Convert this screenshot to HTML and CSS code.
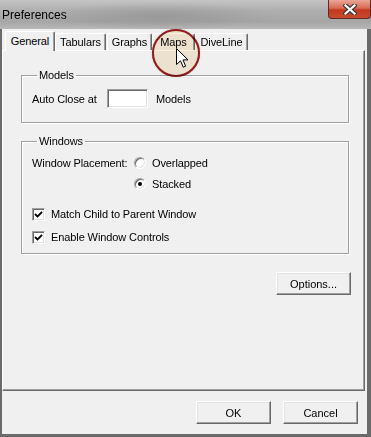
FILE: index.html
```html
<!DOCTYPE html>
<html lang="en">
<head>
  <meta charset="UTF-8" />
  <title>Preferences</title>
  <link rel="stylesheet" href="styles.css">
</head>
<body>
  <div class="window">
    <div class="titlebar">
      <span class="title">Preferences</span>
      <div class="close">
        <svg width="14" height="11" viewBox="0 0 14 11">
          <path d="M2.5 1.5 L11.5 9.5 M11.5 1.5 L2.5 9.5" stroke="#3a3a3a" stroke-width="4.5" stroke-linecap="square" />
          <path d="M2.5 1.5 L11.5 9.5 M11.5 1.5 L2.5 9.5" stroke="#fff" stroke-width="2.2" stroke-linecap="square" />
        </svg>
      </div>
    </div>

    <div class="frame">
      <div class="tabs">
        <div class="tab active tab-general">General</div>
        <div class="tab tab-tabulars">Tabulars</div>
        <div class="tab tab-graphs">Graphs</div>
        <div class="tab tab-maps">Maps</div>
        <div class="tab tab-diveline">DiveLine</div>
      </div>

      <div class="panel">
        <fieldset class="group models">
          <legend>Models</legend>
          <div class="row">
            <span class="row-label">Auto Close at</span>
            <input class="field" type="text" aria-label="Auto close count">
            <span class="row-unit">Models</span>
          </div>
        </fieldset>

        <fieldset class="group windows">
          <legend>Windows</legend>
          <div class="placement">
            <span class="placement-label">Window Placement:</span>
            <div class="radios">
              <div class="option"><span class="radio"></span>Overlapped</div>
              <div class="option"><span class="radio checked"></span>Stacked</div>
            </div>
          </div>
          <div class="option check-row first">
            <span class="checkbox">
              <svg width="9" height="9" viewBox="0 0 9 9"><path d="M1 4 L3.5 6.5 L8 2" fill="none" stroke="#000" stroke-width="1.8" /></svg>
            </span>
            Match Child to Parent Window
          </div>
          <div class="option check-row">
            <span class="checkbox">
              <svg width="9" height="9" viewBox="0 0 9 9"><path d="M1 4 L3.5 6.5 L8 2" fill="none" stroke="#000" stroke-width="1.8" /></svg>
            </span>
            Enable Window Controls
          </div>
        </fieldset>

        <div class="actions">
          <button class="btn">Options...</button>
        </div>
      </div>

      <div class="footer">
        <button class="btn">OK</button>
        <button class="btn">Cancel</button>
      </div>
    </div>

    <!-- click highlight + pointer drawn over the tabs -->
    <div class="spotlight"></div>
    <svg class="cursor" width="14" height="21" viewBox="0 0 14 21">
      <path d="M0.5 0.5 V16.5 L4.5 12.8 L7.2 19.2 L9.6 18.2 L7 11.9 H12 Z" fill="#fff" stroke="#000" stroke-width="1" stroke-linejoin="miter" />
    </svg>
  </div>
</body>
</html>
```

FILE: styles.css
```css
* {
  box-sizing: border-box;
}
body {
  margin: 0;
  font-family: "Liberation Sans", Arial, sans-serif;
  font-size: 11px;
  letter-spacing: -0.1px;
  color: #000;
  background: #f0f0f0;
}
.window {
  position: relative;
  width: 371px;
  height: 437px;
  overflow: hidden;
  background: #f0f0f0;
}

/* title bar */
.titlebar {
  height: 29px;
  display: flex;
  align-items: flex-start;
  padding-left: 2px;
  background:
    radial-gradient(ellipse 120px 14px at 160px 16px, rgba(120,120,120,0.35), transparent),
    linear-gradient(to bottom, #c4c4c4 0%, #b0b0b0 35%, #a6a6a6 75%, #b8b8b8 100%);
}
.title {
  font-size: 12px;
  line-height: 14px;
  margin-top: 8px;
  letter-spacing: 0;
}
.close {
  margin-left: auto;
  width: 43px;
  height: 19px;
  display: flex;
  align-items: center;
  justify-content: center;
  border: 1px solid #5e2a22;
  border-top: none;
  border-radius: 0 0 4px 4px;
  background: linear-gradient(to bottom, #e9a697 0%, #d86a54 45%, #c3381f 55%, #c84a2c 100%);
}

/* frame */
.frame {
  height: 408px;
  display: flex;
  flex-direction: column;
  border-style: solid;
  border-color: #6a6a6a;
  border-width: 0 4px 3px 2px;
}

/* tabs */
.tabs {
  height: 21px;
  display: flex;
  align-items: flex-end;
  padding: 2px 0 0 3px;
}
.tab {
  height: 17px;
  display: flex;
  align-items: center;
  justify-content: center;
  border-top: 1px solid #fff;
  border-left: 1px solid #fff;
  border-right: 1px solid #696969;
  border-radius: 2px 2px 0 0;
  box-shadow: inset -1px 0 #a0a0a0;
  background: #f0f0f0;
}
.tab.active {
  position: relative;
  z-index: 1;
  height: 20px;
  margin-bottom: -1px;
  padding-bottom: 1px;
}
.tab-general { width: 50px; }
.tab-tabulars { width: 51px; }
.tab-graphs { width: 45px; margin-left: 1px; }
.tab-maps { width: 43px; }
.tab-diveline { width: 53px; }

/* panel */
.panel {
  height: 341px;
  margin-right: 2px;
  padding: 0 15px 0 18px;
  border-style: solid;
  border-width: 1px;
  border-color: #fff #696969 #696969 #fff;
  box-shadow: inset -1px -1px #a0a0a0;
}

.group {
  margin: 0;
  min-width: 0;
  border: 1px solid #a0a0a0;
  box-shadow: 1px 1px #fff, inset 1px 1px #fff;
}
.group legend {
  margin-left: 5px;
  padding: 0 2px;
  line-height: 13px;
}
.models {
  margin-top: 18px;
  padding: 7px 0 14px 10px;
}
.windows {
  margin-top: 12px;
  padding: 7px 0 8px 10px;
}

.row {
  display: flex;
  align-items: center;
  height: 19px;
}
.row-label {
  width: 75px;
}
.field {
  width: 41px;
  height: 19px;
  padding: 0;
  background: #fff;
  border-style: solid;
  border-width: 1px;
  border-color: #a0a0a0 #fff #fff #a0a0a0;
  box-shadow: inset 1px 1px #696969, inset -1px -1px #e3e3e3;
}
.row-unit {
  margin-left: 8px;
}

.placement {
  display: flex;
}
.placement-label {
  width: 102px;
  line-height: 16px;
}
.radios {
  display: flex;
  flex-direction: column;
  gap: 5px;
}
.option {
  display: flex;
  align-items: center;
  height: 16px;
}
.radio {
  position: relative;
  width: 12px;
  height: 12px;
  margin-right: 6px;
  border-radius: 50%;
  background: #fff;
  border: 1px solid;
  border-color: #a0a0a0 #fff #fff #a0a0a0;
  box-shadow: inset 1px 1px #696969, inset -1px -1px #e3e3e3;
}
.radio.checked::after {
  content: "";
  position: absolute;
  left: 3px;
  top: 3px;
  width: 4px;
  height: 4px;
  border-radius: 50%;
  background: #000;
}

.check-row {
  margin-top: 7px;
}
.check-row.first {
  margin-top: 14px;
}
.checkbox {
  width: 13px;
  height: 13px;
  margin-right: 6px;
  display: flex;
  align-items: center;
  justify-content: center;
  background: #fff;
  border: 1px solid;
  border-color: #a0a0a0 #fff #fff #a0a0a0;
  box-shadow: inset 1px 1px #696969, inset -1px -1px #e3e3e3;
}

.actions {
  display: flex;
  justify-content: flex-end;
  margin: 18px -2px 0 0;
}

.btn {
  width: 75px;
  height: 23px;
  padding: 0;
  font: inherit;
  color: #000;
  background: #f0f0f0;
  border: 1px solid;
  border-color: #fff #696969 #696969 #fff;
  box-shadow: inset -1px -1px #a0a0a0, inset 1px 1px #e3e3e3;
}

.footer {
  flex: 1;
  display: flex;
  justify-content: flex-end;
  gap: 12px;
  padding: 10px 9px 0 0;
}

/* click highlight */
.spotlight {
  position: absolute;
  left: 152px;
  top: 29px;
  width: 48px;
  height: 48px;
  border-radius: 50%;
  border: 2px solid #9c1d1d;
  background: #fbeedb;
  mix-blend-mode: multiply;
  box-shadow: 0 0 1px rgba(80, 0, 0, 0.6);
}
.cursor {
  position: absolute;
  left: 176px;
  top: 48px;
}
```
